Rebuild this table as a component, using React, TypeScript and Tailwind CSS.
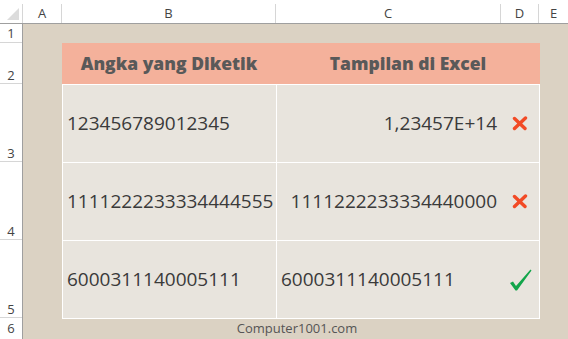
const rows = [
  { b: "123456789012345", c: "1,23457E+14", align: "right", ok: false },
  { b: "1111222233334444555", c: "1111222233334440000", align: "right", ok: false },
  { b: "6000311140005111", c: "6000311140005111", align: "left", ok: true },
];

function Cross() {
  return (
    <svg width="16" height="15" viewBox="0 0 16 15">
      <path d="M2.5 2.5 L13 12.5 M13.5 2 L2.5 12.5" stroke="#f24a25" strokeWidth="3.4" strokeLinecap="round" fill="none" />
    </svg>
  );
}

function Check() {
  return (
    <svg width="23" height="22" viewBox="0 0 23 22">
      <path d="M1 14 L4 12.5 L7 17 L21.5 0.5 L22.5 1.5 L8 21.5 L6.5 21.5 Z" fill="#12a54a" />
    </svg>
  );
}

export default function App() {
  const cols = [
    { label: "A", w: "w-[39px]" },
    { label: "B", w: "w-[214px]" },
    { label: "C", w: "w-[225px]" },
    { label: "D", w: "w-[38px]" },
    { label: "E", w: "flex-1" },
  ];

  return (
    <div className="w-[568px] h-[339px] overflow-hidden bg-white font-['Open_Sans',sans-serif]">
      {/* column headers */}
      <div className="flex h-[24px] pt-[4px] border-b border-[#9f9f9f] text-[13px] text-[#444]">
        <div className="w-[23px] border-r border-[#d6d6d6] flex items-end justify-end pr-[3px] pb-[3px]">
          <div className="w-0 h-0 border-l-[12px] border-l-transparent border-b-[12px] border-b-[#dcdcdc]" />
        </div>
        {cols.map((c) => (
          <div
            key={c.label}
            className={`${c.w} border-r border-[#d6d6d6] last:border-r-0 flex items-center justify-center leading-none`}
          >
            {c.label}
          </div>
        ))}
      </div>

      <div className="flex">
        {/* row headers */}
        <div className="w-[23px] flex flex-col border-r border-[#9f9f9f] text-[13px] text-[#444] leading-none">
          <div className="h-[19px] border-b border-[#d6d6d6] flex items-end justify-center pb-[2px]">1</div>
          <div className="h-[41px] border-b border-[#d6d6d6] flex items-end justify-center pb-[1px]">2</div>
          <div className="h-[78px] border-b border-[#d6d6d6] flex items-end justify-center pb-[1px]">3</div>
          <div className="h-[78px] border-b border-[#d6d6d6] flex items-end justify-center pb-[1px]">4</div>
          <div className="h-[78px] border-b border-[#d6d6d6] flex items-end justify-center pb-[1px]">5</div>
          <div className="h-[21px] flex items-center justify-center">6</div>
        </div>

        {/* sheet */}
        <div className="flex-1 h-[315px] bg-[#dbd2c3] pl-[39px] pt-[19px]">
          <div className="w-[478px]">
            <div className="h-[41px] bg-[#f4b19b] flex text-[17.5px] font-extrabold text-[#595959]">
              <div className="w-[214px] flex items-center justify-center">Angka yang Diketik</div>
              <div className="flex-1 flex items-center justify-center">Tampilan di Excel</div>
            </div>
            <div className="grid grid-cols-[213px_1fr] gap-px bg-white border border-white text-[19px] text-[#3a3a3a]">
              {rows.map((r) => (
                <div key={r.b} className="contents">
                  <div className="h-[77px] bg-[#e8e4dd] flex items-center pl-[4px]">{r.b}</div>
                  <div className="h-[77px] bg-[#e8e4dd] flex items-center">
                    <div
                      className={`w-[224px] ${r.align === "right" ? "text-right pr-[4px]" : "text-left pl-[4px]"}`}
                    >
                      {r.c}
                    </div>
                    <div className="flex-1 flex items-center justify-center">
                      {r.ok ? <Check /> : <Cross />}
                    </div>
                  </div>
                </div>
              ))}
            </div>
            <div className="h-[20px] flex items-center justify-center pr-[8px] text-[13px] text-[#555]">
              Computer1001.com
            </div>
          </div>
        </div>
      </div>
    </div>
  );
}
